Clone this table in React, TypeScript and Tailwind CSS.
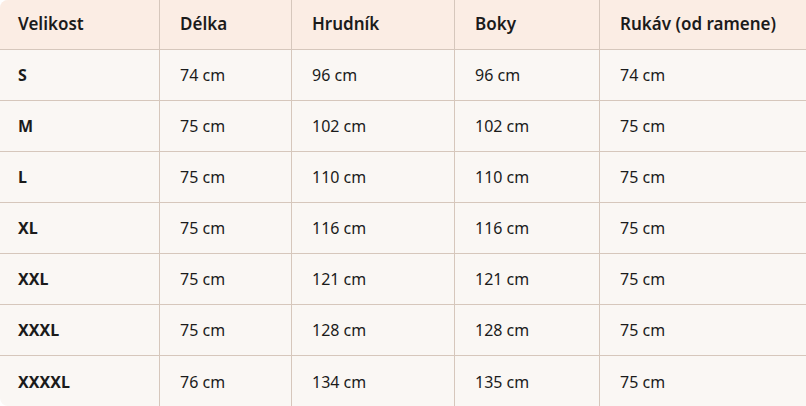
const headers = ["Velikost", "Délka", "Hrudník", "Boky", "Rukáv (od ramene)"];

const rows: string[][] = [
  ["S", "74 cm", "96 cm", "96 cm", "74 cm"],
  ["M", "75 cm", "102 cm", "102 cm", "75 cm"],
  ["L", "75 cm", "110 cm", "110 cm", "75 cm"],
  ["XL", "75 cm", "116 cm", "116 cm", "75 cm"],
  ["XXL", "75 cm", "121 cm", "121 cm", "75 cm"],
  ["XXXL", "75 cm", "128 cm", "128 cm", "75 cm"],
  ["XXXXL", "76 cm", "134 cm", "135 cm", "75 cm"],
];

const cols = "grid grid-cols-[160px_132px_163px_145px_1fr]";

export default function App() {
  return (
    <div className="w-[806px] h-[406px] overflow-hidden rounded-l-lg bg-[#faf7f4] text-[16px] text-[#1b1b1b] font-['Noto_Sans',sans-serif]">
      <div className={`${cols} h-[50px] bg-[#fbede4] border-b border-[#d6c7bc]`}>
        {headers.map((h, i) => (
          <div
            key={h}
            className={`flex items-center pb-[2px] text-[17px] font-semibold ${i < 4 ? "border-r border-[#d6c7bc]" : ""} ${i > 0 ? "pl-5" : "pl-[18px]"}`}
          >
            {h}
          </div>
        ))}
      </div>
      {rows.map((r) => (
        <div key={r[0]} className={`${cols} h-[51px] border-b border-[#d6c7bc] last:border-b-0`}>
          {r.map((c, i) => (
            <div
              key={i}
              className={`flex items-center ${i === 0 ? "pl-[18px] font-bold" : "pl-5"} ${i < 4 ? "border-r border-[#d6c7bc]" : ""}`}
            >
              {c}
            </div>
          ))}
        </div>
      ))}
    </div>
  );
}
